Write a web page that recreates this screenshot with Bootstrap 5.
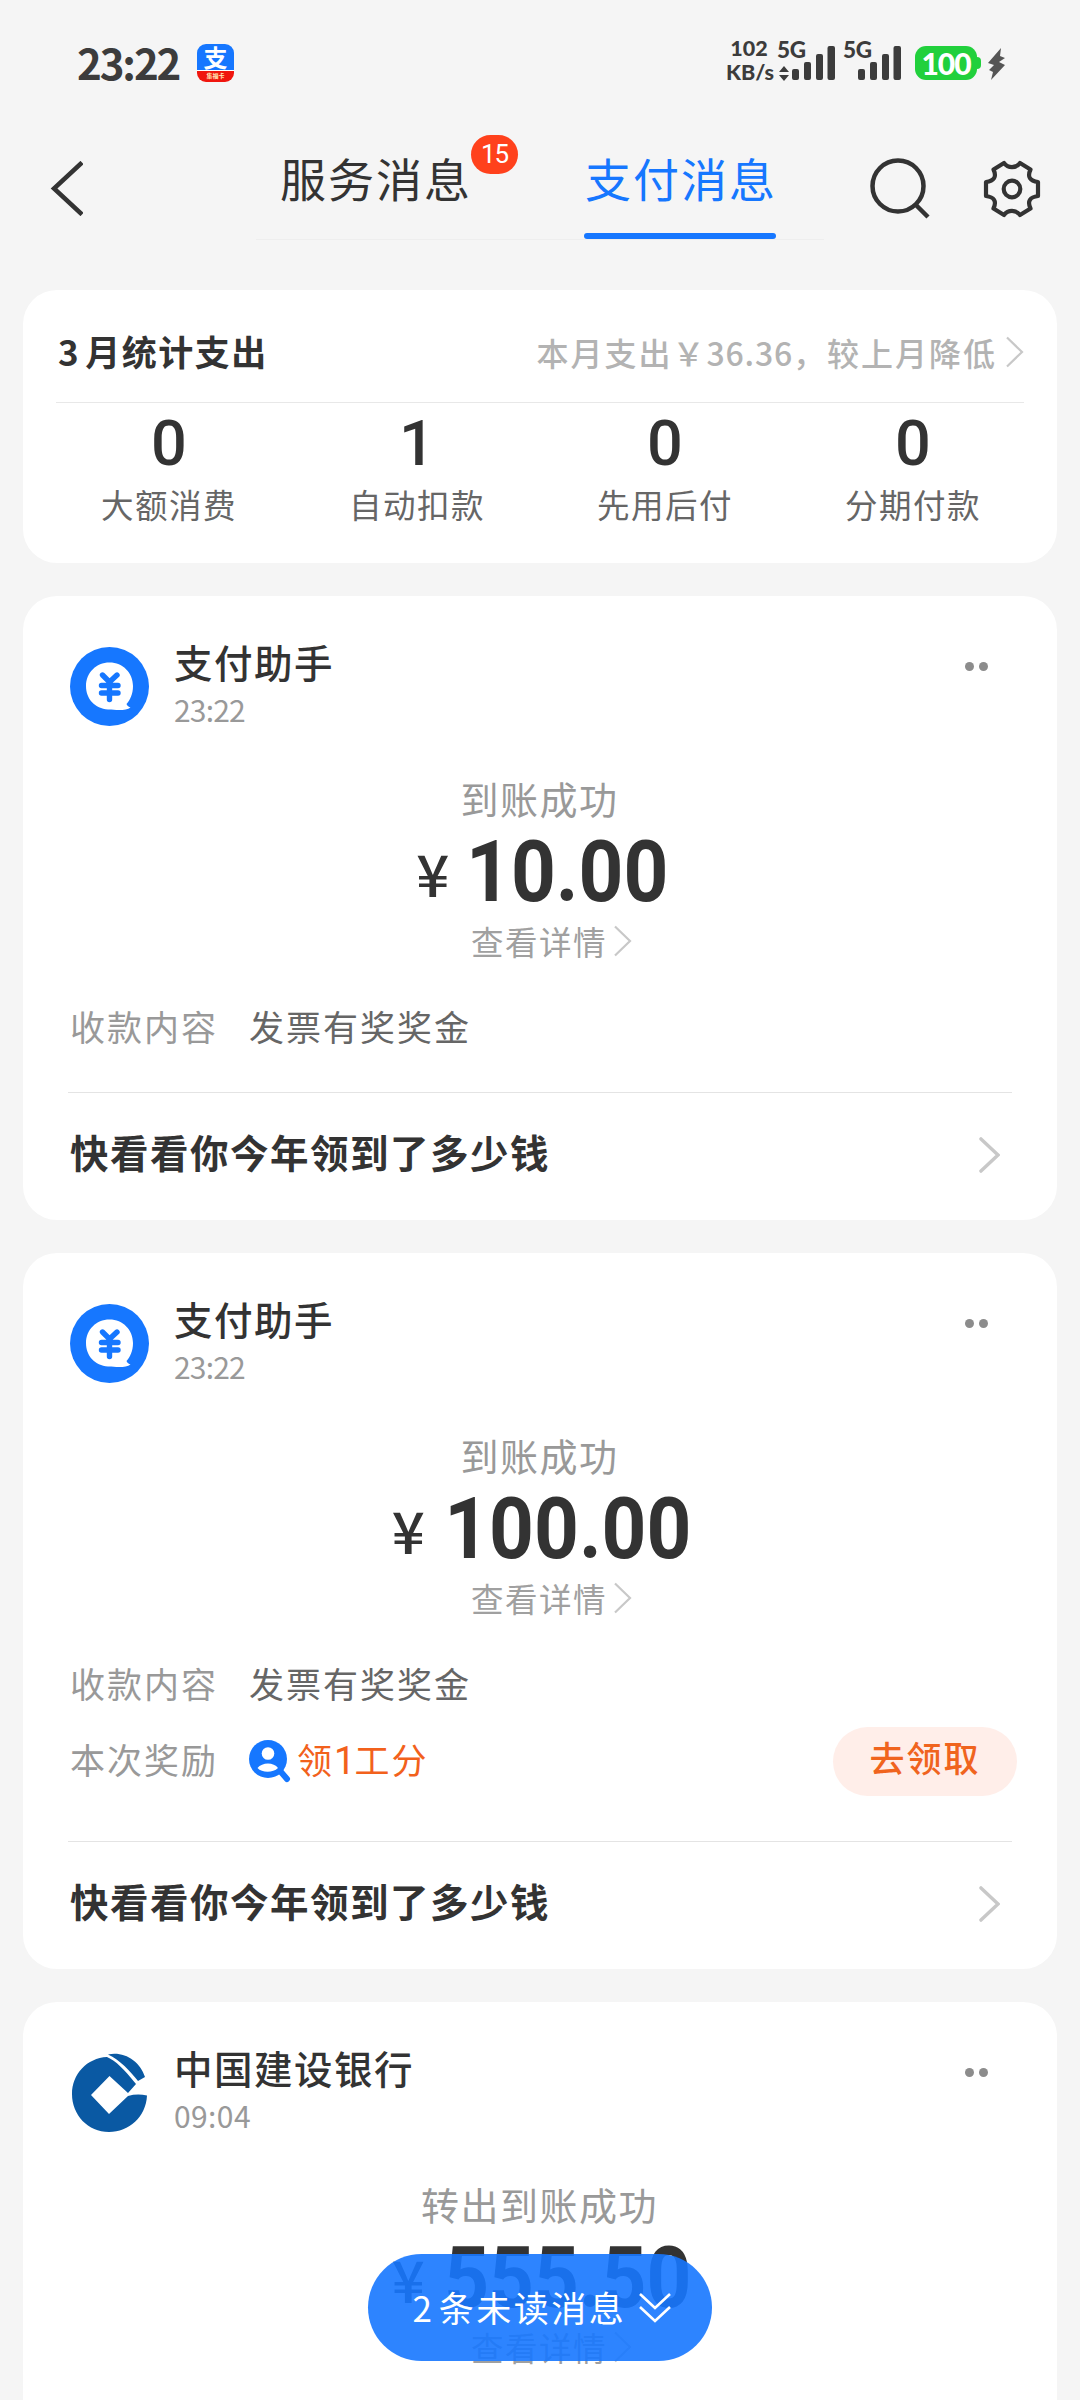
<!DOCTYPE html>
<html lang="zh-CN">
<head>
<meta charset="utf-8">
<meta name="viewport" content="width=device-width, initial-scale=1">
<title>支付消息</title>
<link href="https://cdn.jsdelivr.net/npm/bootstrap@5.3.0/dist/css/bootstrap.min.css" rel="stylesheet">
<style>
html,body{height:2400px;overflow:hidden}
body{background:#f5f5f5;color:#333;font-family:"Noto Sans CJK SC","Noto Sans",sans-serif;width:1080px}
svg{display:block;flex:none}
.screen{height:2400px;overflow:hidden}
/* status bar */
.status-bar{height:126px;padding:0 75px 0 77px;color:#3c3c3c}
.clock{font-size:42px;font-weight:700;line-height:50px;letter-spacing:-2.1px;width:120px;margin-top:-2px}
.app-logo{width:37px;height:38px;border-radius:9px;background:linear-gradient(#1677ff 0 68%,#fff 68% 72%,#f0160e 72%);color:#fff}
.app-logo b{font-size:24px;line-height:25px;height:27px}
.app-logo small{font-size:6px;line-height:9px;font-weight:700;color:#ffe9b8}
.tiny{font-family:Lato,sans-serif;font-weight:900;font-size:21.5px;line-height:24px}
.net-speed{line-height:23.5px;margin-top:-1px}
.gen{font-size:22.5px;letter-spacing:-.3px}
.battery{width:62px;height:34px;border-radius:11px;background:#21d03c;color:#fff;font:900 30px/34px Lato,sans-serif;letter-spacing:-1px}
.nub{width:4px;height:12px;background:#21d03c;border-radius:0 4px 4px 0}
/* title bar */
.title-bar{height:164px;padding:0 38px 0 50px}
.tab-strip{width:568px;height:114px;margin-left:173px;border-bottom:1px solid #eee;padding:0 48px 0 24px}
.tab-item{font-size:46px;letter-spacing:2px;line-height:60px;padding:21px 0 0;color:#333;width:192px;height:113px;text-align:left;white-space:nowrap}
.tab-item.active{color:#1677ff;padding-left:1px}
.tab-item.active::after{content:"";position:absolute;left:0;bottom:0;width:192px;height:6px;border-radius:3px;background:#1677ff}
.count{left:191px;top:9px;width:47px;height:39px;background:#ff411c;font:400 26px/39px Roboto,sans-serif;letter-spacing:-1px;padding:0}
/* cards */
.feed{padding:0 23px;gap:33px}
.panel{border:0;border-radius:34px;background:#fff;color:#333;flex:none}
.summary{height:273px;padding:0 20px 0 22px}
.sum-head{height:113px;margin:0 13px 0 11px;border-bottom:1px solid #e8e8e8;padding-top:11px}
.sum-title{font-size:35px;letter-spacing:1.5px;font-weight:700;margin-left:2px}
.sum-title span{margin-right:5px}
.sum-note{font-size:32px;letter-spacing:2px;font-weight:500;color:#b3b3b3}
.sum-note span{letter-spacing:.8px}
.stat-num{font-family:Roboto,sans-serif;font-size:63px;line-height:70px;font-weight:500;margin-top:6px}
.stat-label{font-size:32.5px;letter-spacing:1.5px;line-height:40px;color:#666;margin-top:5px}
.msg{padding:43px 40px 0 47px;height:624px}
.msg.tall{height:716px}
.avatar{margin-top:8px;width:79px;height:79px}
.sender{font-size:38.5px;letter-spacing:1.5px;line-height:44px;font-weight:500}
.sent-at{font-size:30px;letter-spacing:-.8px;line-height:32px;color:#999;margin-top:10px}
.more{gap:5px;margin:23px 29px 0 0}
.more i{width:9px;height:9px;border-radius:50%;background:#8c8c8c}
.state{font-size:38px;letter-spacing:1.5px;line-height:48px;color:#999;margin:48px 8px 0 0}
.sum{height:80px;margin:10px 0 0 8px}
.yen{font-size:58px;font-weight:500;line-height:80px;margin-right:7px}
.digits{font-family:Roboto,sans-serif;font-size:86px;font-weight:700;line-height:80px;display:inline-block;transform:scaleX(.91)}
.detail{font-size:32.5px;letter-spacing:1.5px;line-height:40px;color:#a0a0a0;margin:9px 0 0 16px}
.kv{font-size:35px;letter-spacing:2px;line-height:50px;color:#666}
.kv .key{color:#999;width:179px}
.orange{color:#f2611c}
.orange i{font:400 38px/1 Roboto,sans-serif;letter-spacing:-1px}
.claim{width:184px;height:69px;border-radius:35px;background:#ffeee9;color:#f0641e;font-size:35px;letter-spacing:2px;font-weight:500;line-height:56px;padding:0 0 10px;border:0;margin-top:-1px}
.rule{height:1px;background:#e4e4e4;margin:-1px 5px 0 -2px}
.more-link{height:118px;font-size:38.5px;letter-spacing:1.5px;font-weight:700;color:#333;padding-right:17px}
.pill{left:368px;top:2254px;width:344px;height:107px;border-radius:54px;background:rgba(22,119,255,.9);color:#fff;font-size:35px;letter-spacing:2.5px;word-spacing:-6px;padding-left:4px}
</style>
</head>
<body>
<svg width="0" height="0" class="position-absolute">
<symbol id="pay" viewBox="0 0 79 79"><circle cx="39.5" cy="39.5" r="39.5" fill="#1677ff"/><path d="M39.500 15.500C53 15.500 63 26 63 39C63 47 60 53 56.500 57C57 59 59 60 60.500 60.500C58 62.500 54 63 49 63C45 63 43 62.500 38 62.500C25 61.500 16 52 16 39S26 15.500 39.500 15.500Z" fill="#fff"/><path d="M32.500 28L39.500 35L47 28M31.500 38.500H48M31.500 46H48M39.500 36V52.500" stroke="#1677ff" stroke-width="5.400" stroke-linecap="round" fill="none"/></symbol>
<symbol id="arrow-s" viewBox="0 0 18 32"><path d="M1 1.500L16 16L1 30.500" fill="none" stroke="#c8c8c8" stroke-width="2.200"/></symbol>
<symbol id="arrow-l" viewBox="0 0 22 38"><path d="M2 2L20 19L2 36" fill="none" stroke="#c8c8c8" stroke-width="3.600" stroke-linecap="round"/></symbol>
<symbol id="bars" viewBox="0 0 43 34"><path d="M0 25a2 2 0 0 1 2-2h3a2 2 0 0 1 2 2v7a2 2 0 0 1-2 2H2a2 2 0 0 1-2-2zM12 18a2 2 0 0 1 2-2h3a2 2 0 0 1 2 2v14a2 2 0 0 1-2 2h-3a2 2 0 0 1-2-2zM24 10a2 2 0 0 1 2-2h3a2 2 0 0 1 2 2v22a2 2 0 0 1-2 2h-3a2 2 0 0 1-2-2zM35.500 2a2 2 0 0 1 2-2h3.500a2 2 0 0 1 2 2v30a2 2 0 0 1-2 2h-3.500a2 2 0 0 1-2-2z" fill="#3c3c3c"/></symbol>
</svg>
<div class="screen position-relative">
  <header class="status-bar d-flex align-items-center">
    <span class="clock">23:22</span>
    <span class="app-logo d-flex flex-column align-items-center"><b>支</b><small>集福卡</small></span>
    <div class="d-flex align-items-start ms-auto" style="height:50px">
      <div class="tiny net-speed text-center" style="width:46px;margin-right:5px">102<br>KB/s</div>
      <div class="d-flex flex-column tiny gen" style="width:15px;white-space:nowrap">5G<svg width="10" height="15" style="margin:4px 0 0 2px"><path d="M5 0L10 6H0zM5 15L10 9H0z" fill="#3c3c3c"/></svg></div>
      <svg width="43" height="34" style="margin:8px 8px 0 0"><use href="#bars"/></svg>
      <div class="tiny gen" style="width:15px;white-space:nowrap">5G</div>
      <svg width="43" height="34" style="margin:8px 14px 0 0"><use href="#bars"/></svg>
      <div class="battery text-center mt-2">100</div><div class="nub" style="margin:19px 7px 0 0"></div>
      <svg width="17" height="32" style="margin-top:10px"><path d="M13 0L0 15L6 17L1 22L5 24L3 32L17 17L11 14L17 10L12 8z" fill="#555"/></svg>
    </div>
  </header>

  <nav class="title-bar d-flex align-items-start">
    <svg width="33" height="55" style="margin-top:35px"><path d="M32 1.500L4 27.500L32 53.500" fill="none" stroke="#333" stroke-width="4.500"/></svg>
    <div class="tab-strip d-flex justify-content-between">
      <a class="tab-item position-relative text-decoration-none">服务消息<span class="count badge rounded-pill position-absolute">15</span></a>
      <a class="tab-item active position-relative text-decoration-none">支付消息</a>
    </div>
    <div class="d-flex ms-auto" style="gap:53px;margin:31px 1px 0 0">
      <svg width="62" height="64"><circle cx="30" cy="29" r="25.500" fill="none" stroke="#333" stroke-width="4.500"/><path d="M47 47L60 60" stroke="#333" stroke-width="4.500"/></svg>
      <svg width="58" height="62" viewBox="-29 -32 58 62"><path d="M-8-26C-4-20.500 4-20.500 8-26L18.500-19.500C15-12 18-8 26-7V7C18 8 15 12 18.500 19.500L8 26C4 20.500-4 20.500-8 26L-18.500 19.500C-15 12-18 8-26 7V-7C-18-8-15-12-18.500-19.500Z" fill="none" stroke="#333" stroke-width="4.200" stroke-linejoin="round"/><circle r="8.300" fill="none" stroke="#333" stroke-width="4.200"/></svg>
    </div>
  </nav>

  <main class="feed d-flex flex-column">
    <section class="panel card summary">
      <div class="sum-head d-flex align-items-center justify-content-between">
        <div class="sum-title"><span>3</span>月统计支出</div>
        <div class="sum-note d-flex align-items-center">本月支出￥<span>36.36</span>，较上月降低<svg width="18" height="32" style="margin-left:9px"><use href="#arrow-s"/></svg></div>
      </div>
      <div class="row g-0 text-center">
        <div class="col"><div class="stat-num">0</div><div class="stat-label">大额消费</div></div>
        <div class="col"><div class="stat-num">1</div><div class="stat-label">自动扣款</div></div>
        <div class="col"><div class="stat-num">0</div><div class="stat-label">先用后付</div></div>
        <div class="col"><div class="stat-num">0</div><div class="stat-label">分期付款</div></div>
      </div>
    </section>

    <article class="panel card msg">
      <div class="d-flex">
        <svg class="avatar"><use href="#pay"/></svg>
        <div style="margin-left:25px"><div class="sender">支付助手</div><div class="sent-at">23:22</div></div>
        <div class="more d-flex ms-auto"><i></i><i></i></div>
      </div>
      <div class="state text-center">到账成功</div>
      <div class="sum d-flex justify-content-center"><span class="yen">¥</span><span class="digits">10.00</span></div>
      <div class="detail d-flex justify-content-center align-items-center">查看详情<svg width="18" height="32" style="margin-left:7px"><use href="#arrow-s"/></svg></div>
      <div class="kv d-flex" style="margin:40px 0 42px"><span class="key">收款内容</span><span>发票有奖奖金</span></div>
      <div class="rule"></div>
      <a class="more-link d-flex align-items-center justify-content-between text-decoration-none">快看看你今年领到了多少钱<svg width="21" height="36" style="margin-top:5px"><use href="#arrow-l"/></svg></a>
    </article>

    <article class="panel card msg tall">
      <div class="d-flex">
        <svg class="avatar"><use href="#pay"/></svg>
        <div style="margin-left:25px"><div class="sender">支付助手</div><div class="sent-at">23:22</div></div>
        <div class="more d-flex ms-auto"><i></i><i></i></div>
      </div>
      <div class="state text-center">到账成功</div>
      <div class="sum d-flex justify-content-center"><span class="yen">¥</span><span class="digits">100.00</span></div>
      <div class="detail d-flex justify-content-center align-items-center">查看详情<svg width="18" height="32" style="margin-left:7px"><use href="#arrow-s"/></svg></div>
      <div class="kv d-flex" style="margin:40px 0 20px"><span class="key">收款内容</span><span>发票有奖奖金</span></div>
      <div class="kv d-flex" style="height:69px;margin-bottom:45px">
        <span class="key" style="margin-top:6px">本次奖励</span>
        <svg width="42" height="43" style="margin:12px 6px 0 0"><path d="M32 32L38 39" stroke="#1677ff" stroke-width="6" stroke-linecap="round"/><circle cx="19" cy="19" r="19" fill="#1677ff"/><circle cx="19" cy="13.500" r="6.300" fill="#fff"/><path d="M8.500 28C13 22 25 22 29 28C24 33 13 33 8.500 28Z" fill="#fff"/></svg>
        <span class="orange" style="margin-top:6px">领<i>1</i>工分</span>
        <button class="claim btn ms-auto">去领取</button>
      </div>
      <div class="rule"></div>
      <a class="more-link d-flex align-items-center justify-content-between text-decoration-none">快看看你今年领到了多少钱<svg width="21" height="36" style="margin-top:5px"><use href="#arrow-l"/></svg></a>
    </article>

    <article class="panel card msg">
      <div class="d-flex">
        <svg class="avatar" viewBox="-2 0 79 79"><g fill="#0a59a3"><path d="M36 1.500C52-2 68 8 73 24L66 28C58 18 48 7 36 1.500Z"/><path d="M35 4C44 8 52 16 64 31L56 40L37.500 23L19 42L37 61L56 43Q65 40.500 75 42.500C74 64 57 79 37 79C16 79 0 62 0 41C0 21 15 5 35 4Z"/></g></svg>
        <div style="margin-left:25px"><div class="sender">中国建设银行</div><div class="sent-at" style="letter-spacing:.4px">09:04</div></div>
        <div class="more d-flex ms-auto"><i></i><i></i></div>
      </div>
      <div class="state text-center">转出到账成功</div>
      <div class="sum d-flex justify-content-center"><span class="yen">¥</span><span class="digits">555.50</span></div>
      <div class="detail d-flex justify-content-center align-items-center">查看详情<svg width="18" height="32" style="margin-left:7px"><use href="#arrow-s"/></svg></div>
    </article>
  </main>

  <div class="pill position-absolute d-flex align-items-center justify-content-center">2 条未读消息<svg width="32" height="32" style="margin-left:13px"><path d="M1 2L16 16L31 2M1 15L16 29L31 15" fill="none" stroke="#fff" stroke-width="2.600"/></svg></div>
</div>
<script src="https://cdn.jsdelivr.net/npm/bootstrap@5.3.0/dist/js/bootstrap.bundle.min.js"></script>
</body>
</html>
